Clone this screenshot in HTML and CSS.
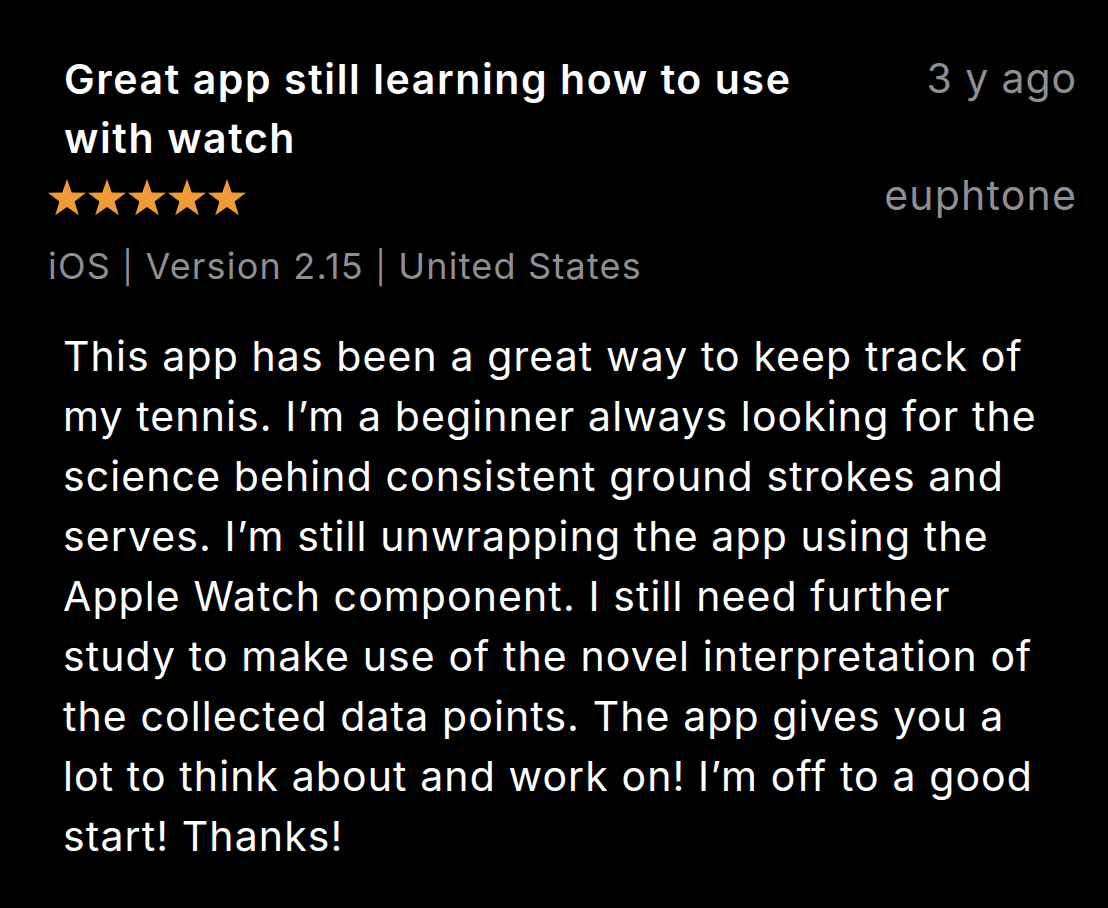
FILE: index.html
```html
<!DOCTYPE html>
<html lang="en">
<head>
<meta charset="utf-8">
<title>Review</title>
<link rel="stylesheet" href="styles.css">
</head>
<body>
<main class="review">
  <header class="head">
    <h1 class="title">Great app still learning how to use with watch</h1>
    <span class="date">3 y ago</span>
  </header>
  <div class="rating-row">
    <div class="stars" aria-label="5 stars">
      <svg class="star" viewBox="0 0 40 38"><path d="M20 0L24.7 13.53L39.02 13.82L27.61 22.47L31.76 36.18L20 28L8.24 36.18L12.39 22.47L.98 13.82L15.3 13.53Z"/></svg>
      <svg class="star" viewBox="0 0 40 38"><path d="M20 0L24.7 13.53L39.02 13.82L27.61 22.47L31.76 36.18L20 28L8.24 36.18L12.39 22.47L.98 13.82L15.3 13.53Z"/></svg>
      <svg class="star" viewBox="0 0 40 38"><path d="M20 0L24.7 13.53L39.02 13.82L27.61 22.47L31.76 36.18L20 28L8.24 36.18L12.39 22.47L.98 13.82L15.3 13.53Z"/></svg>
      <svg class="star" viewBox="0 0 40 38"><path d="M20 0L24.7 13.53L39.02 13.82L27.61 22.47L31.76 36.18L20 28L8.24 36.18L12.39 22.47L.98 13.82L15.3 13.53Z"/></svg>
      <svg class="star" viewBox="0 0 40 38"><path d="M20 0L24.7 13.53L39.02 13.82L27.61 22.47L31.76 36.18L20 28L8.24 36.18L12.39 22.47L.98 13.82L15.3 13.53Z"/></svg>
    </div>
    <span class="author">euphtone</span>
  </div>
  <p class="meta">iOS <span class="sep">|</span> Version 2.15 <span class="sep">|</span> United States</p>
  <p class="body">This app has been a great way to keep track of my tennis. I’m a beginner always looking for the science behind consistent ground strokes and serves. I’m still unwrapping the app using the Apple Watch component. I still need further study to make use of the novel interpretation of the collected data points. The app gives you a lot to think about and work on! I’m off to a good start! Thanks!</p>
</main>
</body>
</html>
```

FILE: styles.css
```css
* { box-sizing: border-box; }
html, body {
  margin: 0;
  padding: 0;
  background: #000;
}
body {
  font-family: Inter, "Noto Sans", "Liberation Sans", sans-serif;
  color: #fff;
  width: 1108px;
  height: 908px;
  overflow: hidden;
}
.review {
  padding: 50px 31px 0 48px;
}
.head {
  display: flex;
  justify-content: space-between;
  align-items: flex-start;
}
.title {
  margin: 0;
  padding-left: 16px;
  width: 790px;
  font-size: 41px;
  font-weight: 600;
  line-height: 59px;
  letter-spacing: 1.6px;
}
.date {
  padding-top: 3px;
  font-size: 41px;
  line-height: 50px;
  color: #8e8e93;
  letter-spacing: 0.9px;
}
.rating-row {
  display: flex;
  justify-content: space-between;
  align-items: flex-start;
}
.stars {
  display: flex;
  padding-top: 11px;
  margin-left: -1px;
}
.star {
  width: 40px;
  height: 38px;
  fill: #f19a38;
}
.author {
  padding-top: 2px;
  font-size: 41px;
  line-height: 50px;
  color: #8e8e93;
  letter-spacing: 1.2px;
}
.meta {
  margin: 21px 0 0;
  font-size: 36px;
  line-height: 50px;
  color: #8e8e93;
  letter-spacing: 1.2px;
}
.sep {
  font-size: 32px;
}
.body {
  margin: 33px 0 0;
  padding: 0 32px 0 15px;
  font-size: 41px;
  line-height: 60px;
  letter-spacing: 1.1px;
}
```
